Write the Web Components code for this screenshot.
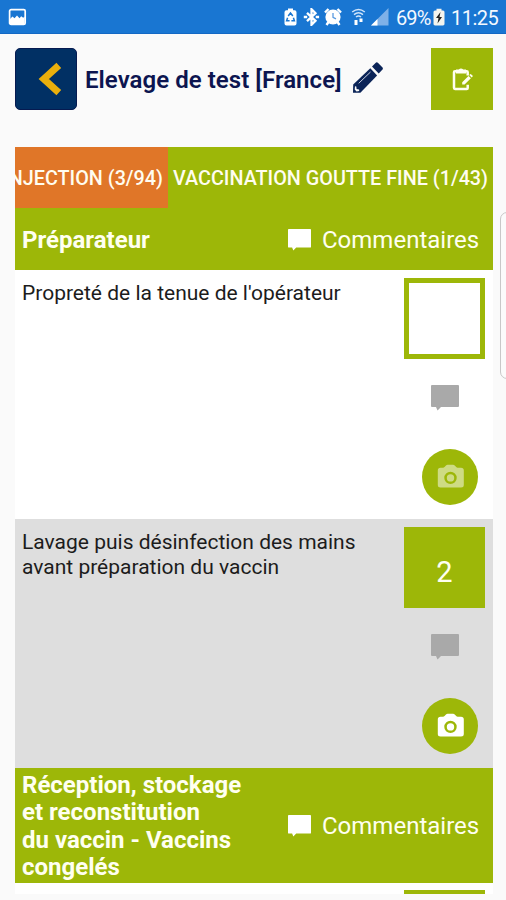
<!DOCTYPE html>
<html lang="fr">
<head>
<meta charset="utf-8">
<title>Elevage de test</title>
<style>
html,body{margin:0;height:900px;overflow:hidden;background:#fafafa;font-family:Roboto,"Noto Sans",sans-serif}
</style>
</head>
<body>
<audit-app></audit-app>
<script>
function define(name, html) {
  const t = document.createElement('template');
  t.innerHTML = html;
  customElements.define(name, class extends HTMLElement {
    constructor() {
      super();
      this.attachShadow({mode: 'open'}).appendChild(t.content.cloneNode(true));
    }
  });
}

define('status-bar', `
<style>
:host{display:flex;box-sizing:border-box;height:34px;padding:1px 9px 0 8px;background:#1976d2;border-bottom:1px solid #1368c4;align-items:center;color:#f4f9ff;font-size:20px}
svg{display:block;flex:none}
.gap{flex:1}
.t{white-space:nowrap;line-height:24px;padding-top:2px}
.pct{width:34px;letter-spacing:-.9px;margin-left:7px}
.time{width:46px;letter-spacing:-.5px;margin-left:6px}
</style>
<svg width="19" height="18" viewBox="0 0 19 18"><rect x="1.6" y="1.6" width="15.6" height="14.8" rx="1.5" fill="none" stroke="#fff" stroke-width="1.7"/><path d="M2 11l2.500-2.500 2 1.700 2.500-2.700 2.500 2.700 1.700-2 2 1.500 1.500-1.200v8H2z" fill="#fff"/></svg>
<span class="gap"></span>
<svg width="14" height="18" viewBox="0 0 14 18"><path d="M4 .5h5v1.700h1.500q2 0 2 2V15.500q0 2-2 2h-8q-2 0-2-2V4.200q0-2 2-2H4z" fill="#fff"/><path d="M4.200 8l2.300-3 2.300 3M3.600 9.700l-1 3h3M9.400 9.700l1 3h-3" fill="none" stroke="#1976d2" stroke-width="1.500"/></svg>
<svg width="17" height="18" viewBox="0 0 17 18" style="margin-left:5px"><path d="M4 4.800l8.500 8-4 4V1.200l4 4-8.500 8" fill="none" stroke="#fff" stroke-width="2.300"/><path d="M.8 9h3.400M12.700 9h3.400" stroke="#fff" stroke-width="2.400"/></svg>
<svg width="18" height="18" viewBox="0 0 18 18" style="margin-left:4px"><circle cx="9" cy="9" r="7.600" fill="#fff"/><path d="M1 4.500L4.500 1M17 4.500L13.500 1M4.500 14L2.500 17M13.500 14l2 3" stroke="#fff" stroke-width="2.400"/><path d="M9 5v4.300l3 1.600" fill="none" stroke="#5a9be0" stroke-width="1.300"/></svg>
<svg width="15" height="18" viewBox="0 0 15 18" style="margin-left:9px"><path d="M1.200 4q6.300-5 12.600 0M3 6.600q4.500-3.500 9 0M5 9q2.500-2 5 0" fill="none" stroke="#cfe4fa" stroke-width="1.500"/><path d="M3.500 12h3v5h-3zM8.500 10.500h3V14h-3z" fill="#fff"/></svg>
<svg width="18" height="18" viewBox="0 0 18 18" style="margin-left:5px"><path d="M17.500 0v17.500H0z" fill="#7fb1e8"/><path d="M6.500 11v6.500H0z" fill="#fff"/></svg>
<span class="t pct">69%</span>
<svg width="12" height="18" viewBox="0 0 12 18" style="margin-left:3px"><path d="M3.500.8h5v1.800h1.500q1.500 0 1.500 1.500v12q0 1.400-1.500 1.400H2Q.5 17.500.5 16.100v-12q0-1.500 1.500-1.500h1.500z" fill="#f4f4ee"/><path d="M7.500 4L3 10h2.500l-1 5.500L9 9H6.500z" fill="#222"/></svg>
<span class="t time">11:25</span>
`);

define('page-header', `
<style>
:host{display:flex;box-sizing:border-box;height:113px;padding:14px 13.500px 0 14.500px;align-items:flex-start}
svg{display:block;flex:none}
.back{box-sizing:border-box;width:62px;height:62px;border-radius:5px;background:#013064;border:1px solid #061a50}
.title{margin:16.500px 0 0 8.500px;width:258px;font-size:24px;letter-spacing:.05px;line-height:30px;font-weight:600;color:#0c1550;white-space:nowrap}
.pencil{margin:14px 0 0 9px}
.note{margin-left:auto;width:62px;height:62px;background:#9db708}
</style>
<div class="back"><svg width="60" height="60" viewBox="0 0 60 60"><path d="M42.800 16.300L27.800 30l15 13.700" fill="none" stroke="#eaaf0c" stroke-width="7"/></svg></div>
<div class="title">Elevage de test [France]</div>
<svg class="pencil" width="32" height="33" viewBox="0 0 32 33"><path d="M1.200 22.500L18.300 6.200l6.800 7.200L8.400 30.700H1z" fill="#0b2458"/><path d="M20 4.600l3.500-3.700q1.300-1.200 2.600 0l4.200 4.400q1.200 1.200 0 2.500l-3.600 3.800z" fill="#0b2458"/><path d="M6.700 21.300L18.500 10" stroke="#c9cfdf" stroke-width="1"/><path d="M3 24.300l1.300.3.300 2.400 2.500.4.100 1.600-2.700.4-1.800-1.800z" fill="#fafafa"/></svg>
<div class="note"><svg width="62" height="62" viewBox="0 0 62 62"><g fill="none" stroke="#fffef0" stroke-width="2.500"><path d="M36.700 27.500v-3.200q0-1-1-1H24q-1 0-1 1v15.500q0 1.200 1 1.200h11.700q1 0 1-1v-3.300"/></g><path d="M25 21.500h2.700q2.300-2 4.600 0H35v4H25z" fill="#fffef0"/><path d="M31.200 34.200l6.300-6.300 2.400 2.400-6.300 6.200h-2.400zM38.300 27.100l.8-.8q.6-.4 1.200.1l1.200 1.200q.5.600 0 1.200l-.8.800z" fill="#fffef0"/></svg></div>
`);

define('tab-strip', `
<style>
:host{display:flex;height:61px;overflow:hidden;background:#9db708;color:#fffdf0;font-size:19.800px;font-weight:500;line-height:63px;white-space:nowrap}
.on{width:153.500px;box-sizing:border-box;background:#e07628;display:flex;justify-content:flex-end;padding-right:5px;overflow:hidden;flex:none}
.off{padding-left:5px}
</style>
<div class="on"><span>INJECTION (3/94)</span></div><div class="off">VACCINATION GOUTTE FINE (1/43)</div>
`);

define('comment-icon', `
<style>:host{display:block;flex:none;width:23px;height:22px;color:#fff}svg{display:block;width:100%;height:100%}</style>
<svg viewBox="0 0 28 26" preserveAspectRatio="none"><path d="M1 0h26q1 0 1 1v20q0 1-1 1H10l-3.500 3.500L5 22H1q-1 0-1-1V1q0-1 1-1z" fill="currentColor"/></svg>
`);

define('section-head', `
<style>
:host{display:flex;box-sizing:border-box;height:62px;padding:1px 14px 0 7.500px;background:#9db708;color:#fffff0;align-items:center}
.name{flex:1;font-size:24px;line-height:27.500px;font-weight:700;white-space:nowrap;padding-top:2px}
comment-icon{margin-right:11px}
.c{width:156.500px;font-size:24px;line-height:30px;white-space:nowrap}
</style>
<div class="name"><slot></slot></div><comment-icon></comment-icon><div class="c">Commentaires</div>
`);

define('audit-row', `
<style>
:host{display:flex;box-sizing:border-box;height:249px;padding:8px 7.500px 0;background:#fff;justify-content:space-between;align-items:flex-start}
:host([shaded]){background:#dedede}
.q{font-size:21px;line-height:24.500px;color:#1c1c1c;white-space:nowrap;margin-top:3px}
.side{width:81px;display:flex;flex-direction:column;align-items:center;flex:none}
.box{box-sizing:border-box;width:81px;height:81px;border:5px solid #9db708;display:grid;place-items:center;font-size:29px;color:#fffff0;padding-top:9px}
:host([shaded]) .box{background:#9db708}
comment-icon{width:28px;height:26px;color:#a9a9a9;margin-top:26px}
.cam{width:56px;height:56px;border-radius:50%;background:#9db708;margin:38px 0 0 11px}
.cam svg{display:block;opacity:.5}
:host([shaded]) .cam svg{opacity:1}
:host([shaded]) .side{margin-top:-.5px}
</style>
<div class="q"><slot></slot></div>
<div class="side"><div class="box"><slot name="score"></slot></div><comment-icon></comment-icon>
<div class="cam"><svg width="56" height="56" viewBox="0 0 56 56"><path fill-rule="evenodd" d="M22.500 18l1.500-1.500q.7-.7 1.600-.7h5.500q.9 0 1.600.7L34.200 18q.6.700 1.500.7H39q2.800 0 2.800 2.800V36q0 2.500-2.800 2.500H18.500q-2.700 0-2.700-2.500V21.500q0-2.800 2.700-2.800H21q.9 0 1.500-.7zM28.500 22.700a6.200 6.200 0 100 12.400 6.200 6.200 0 000-12.400zm0 2.500a3.700 3.700 0 110 7.400 3.700 3.700 0 010-7.400z" fill="#fff"/></svg></div></div>
`);

define('audit-app', `
<style>
:host{display:block;position:relative;width:506px;height:900px;overflow:hidden}
main{margin:0 13.500px 0 14.500px;height:747px;overflow:hidden}
.tall{height:115px;padding-top:0}
.last{padding-top:7px}
.scroll{position:absolute;left:500px;top:212px;width:20px;height:165px;border:1px solid #c8c8c8;border-radius:7px;background:#fbfbfb}
</style>
<status-bar></status-bar>
<page-header></page-header>
<main>
<tab-strip></tab-strip>
<section-head>Préparateur</section-head>
<audit-row>Propreté de la tenue de l'opérateur</audit-row>
<audit-row shaded>Lavage puis désinfection des mains<br>avant préparation du vaccin<span slot="score">2</span></audit-row>
<section-head class="tall">Réception, stockage<br>et reconstitution<br>du vaccin - Vaccins<br>congelés</section-head>
<audit-row class="last"></audit-row>
</main>
<div class="scroll"></div>
`);
</script>
</body>
</html>
